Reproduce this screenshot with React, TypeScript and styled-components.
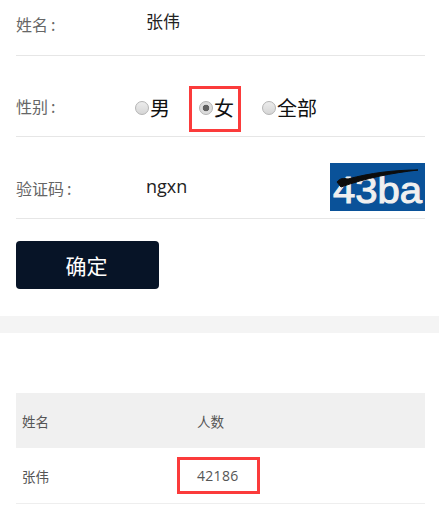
import React from "react"
import styled, { createGlobalStyle } from "styled-components"

const Global = createGlobalStyle`
  html, body {
    margin: 0;
    padding: 0;
    background: #fff;
  }
  body {
    font-family: "Noto Sans CJK SC", "Liberation Sans", sans-serif;
  }
`

const Page = styled.div`
  width: 439px;
`

const Form = styled.div`
  padding: 0 14px 28px 16px;
`

const Row = styled.div<{ $height: number; $top: number }>`
  display: flex;
  align-items: flex-start;
  height: ${(p) => p.$height}px;
  padding-top: ${(p) => p.$top}px;
  box-sizing: border-box;
  border-bottom: 1px solid #e6e6e6;
`

const Label = styled.div`
  width: 130px;
  flex: none;
  font-size: 16px;
  line-height: 24px;
  color: #666;
`

const Colon = styled.span`
  margin-left: 3px;
`

const Value = styled.div`
  flex: 1;
  margin-top: -3px;
  font-size: 17px;
  line-height: 24px;
  color: #222;
`

const CodeValue = styled(Value)`
  font-family: "Open Sans", "Liberation Sans", sans-serif;
  font-size: 18px;
  margin-top: -2px;
`

const RadioGroup = styled.div`
  display: flex;
  margin-left: -11px;
`

const RadioLabel = styled.label<{ $width: number }>`
  position: relative;
  display: flex;
  align-items: center;
  width: ${(p) => p.$width}px;
  font-size: 20px;
  line-height: 28px;
  color: #111;
`

const RadioDot = styled.span<{ $checked?: boolean }>`
  width: 14px;
  height: 14px;
  flex: none;
  margin-right: 1px;
  box-sizing: border-box;
  border: 1px solid #b4b4b4;
  border-radius: 50%;
  background: ${(p) =>
    p.$checked
      ? "radial-gradient(circle, #606060 0 3px, #dcdcdc 3.6px)"
      : "linear-gradient(#ececec, #d6d6d6)"};
`

const Highlight = styled.span`
  position: absolute;
  box-sizing: border-box;
  border: 3px solid #fb3b3b;
`

const RadioHighlight = styled(Highlight)`
  left: -10px;
  top: -8px;
  width: 52px;
  height: 46px;
`

const CountHighlight = styled(Highlight)`
  left: -14px;
  top: -10px;
  width: 83px;
  height: 37px;
`

const Captcha = styled.svg`
  width: 95px;
  height: 48px;
  flex: none;
  margin-top: -13px;
  margin-left: auto;
`

const Submit = styled.button`
  display: block;
  width: 143px;
  height: 48px;
  margin-top: 22px;
  padding: 0 2px 0 0;
  border: 0;
  border-radius: 4px;
  background: #071427;
  color: #fff;
  font-family: inherit;
  font-size: 21px;
`

const Divider = styled.div`
  height: 17px;
  margin-top: -1px;
  background: #f4f4f4;
`

const TableWrap = styled.div`
  padding: 60px 14px 0 16px;
`

const TableRow = styled.div<{ $head?: boolean }>`
  display: grid;
  grid-template-columns: 175px 1fr;
  align-items: center;
  height: ${(p) => (p.$head ? 55 : 56)}px;
  box-sizing: border-box;
  background: ${(p) => (p.$head ? "#f0f0f0" : "#fff")};
  border-bottom: ${(p) => (p.$head ? "0" : "1px solid #eee")};
  font-size: 13.5px;
  color: #555;
`

const Cell = styled.div`
  position: relative;
  padding-left: 6px;
  line-height: 18px;
`

const CountCell = styled(Cell)`
  font-family: "Open Sans", "Liberation Sans", sans-serif;
  font-size: 14px;
  letter-spacing: 0.3px;
`

export default function App() {
  return (
    <Page>
      <Global />
      <Form>
        <Row $height={56} $top={12}>
          <Label>
            姓名<Colon>:</Colon>
          </Label>
          <Value>张伟</Value>
        </Row>
        <Row $height={81} $top={38}>
          <Label>
            性别<Colon>:</Colon>
          </Label>
          <RadioGroup>
            <RadioLabel $width={64}>
              <RadioDot />男
            </RadioLabel>
            <RadioLabel $width={63}>
              <RadioDot $checked />女
              <RadioHighlight />
            </RadioLabel>
            <RadioLabel $width={60}>
              <RadioDot />全部
            </RadioLabel>
          </RadioGroup>
        </Row>
        <Row $height={82} $top={39}>
          <Label>
            验证码<Colon>:</Colon>
          </Label>
          <CodeValue>ngxn</CodeValue>
          <Captcha viewBox="0 0 95 48">
            <rect width="95" height="48" fill="#0a5299" />
            <text
              x="3"
              y="40"
              fontFamily="'Liberation Sans', sans-serif"
              fontSize="36"
              fill="#f0f0f0"
              stroke="#f0f0f0"
              strokeWidth="1"
              textLength="89"
              lengthAdjust="spacingAndGlyphs"
            >
              43ba
            </text>
            <path
              d="M7 19 C 10 15, 14 15, 18 16 C 40 10, 64 7, 88 7 C 62 10, 36 15, 11 24 Z"
              fill="#0c0c0c"
              stroke="#0c0c0c"
              strokeWidth="1"
            />
          </Captcha>
        </Row>
        <Submit>确定</Submit>
      </Form>
      <Divider />
      <TableWrap>
        <TableRow $head>
          <Cell>姓名</Cell>
          <Cell>人数</Cell>
        </TableRow>
        <TableRow>
          <Cell>张伟</Cell>
          <CountCell>
            42186
            <CountHighlight />
          </CountCell>
        </TableRow>
      </TableWrap>
    </Page>
  )
}
